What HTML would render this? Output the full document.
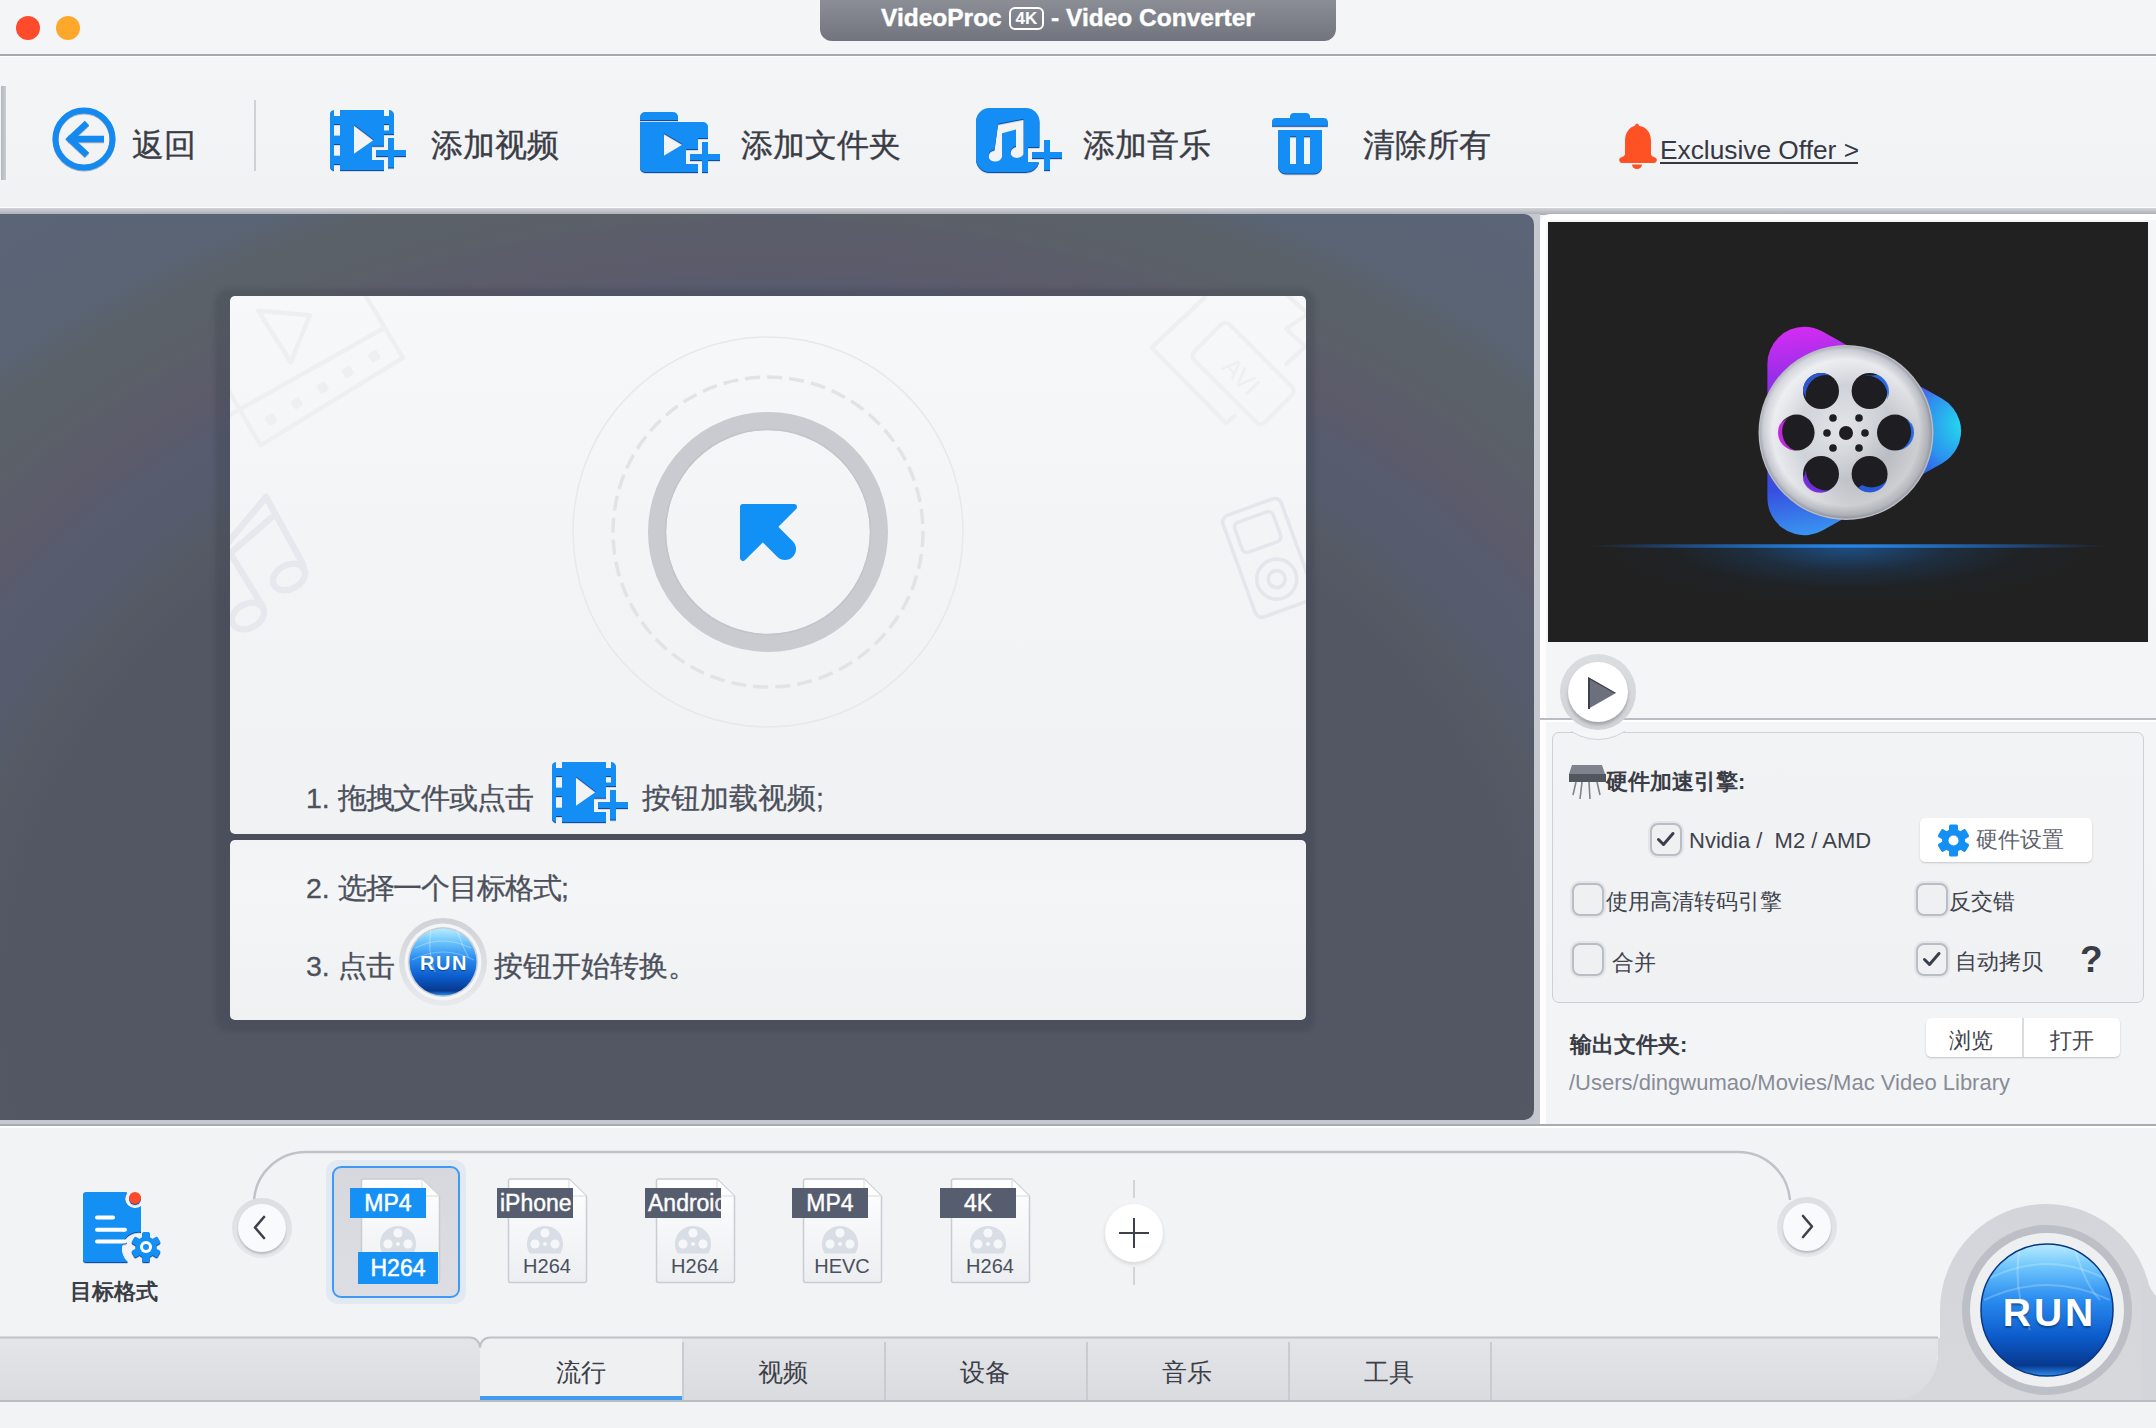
<!DOCTYPE html>
<html><head><meta charset="utf-8">
<style>
*{margin:0;padding:0;box-sizing:border-box}
html,body{width:2156px;height:1428px;overflow:hidden;background:#f2f3f5;font-family:"Liberation Sans",sans-serif;color:#3c3f48}
.a{position:absolute}
#title{left:0;top:0;width:2156px;height:54px;background:#f4f5f7}
#tline{left:0;top:54px;width:2156px;height:4px;background:linear-gradient(#a6a8ae 0,#a6a8ae 2px,#fff 2px,#fff 3px,#f4f5f7 3px)}
#tool{left:0;top:58px;width:2156px;height:149px;background:linear-gradient(#f4f5f7,#f1f2f4)}
#tbot{left:0;top:207px;width:2156px;height:8px;background:linear-gradient(#fff 0,#fff 1px,#d2d4d9 1px,#a8abb2 100%)}
#darkwrap{left:0;top:214px;width:1540px;height:911px;background:#c5c8ce}
#dark{left:0;top:214px;width:1534px;height:906px;border-radius:0 10px 10px 0;background:radial-gradient(966px 750px at 768px 786px,#535764 0%,#535764 78%,#555a65 84%,#565c6e 89%,#575c6f 94%,#5c5b6a 99%,#5b5d6a 102%,#5b6068 106%,#5a6169 112%,#5a6475 117%,#5b6577 135%)}
#rpanel{left:1540px;top:214px;width:616px;height:911px;background:#f4f5f7;border-radius:10px 0 0 0}
#video{left:1548px;top:222px;width:600px;height:420px;background:#212121}
#bline{left:0;top:1124px;width:2156px;height:2px;background:#a8abb2}
#bottom{left:0;top:1126px;width:2156px;height:302px;background:#f2f3f5}
.tl{border-radius:50%;width:24px;height:24px}
.bicon{filter:drop-shadow(0 1.5px 0 #0a4fae) drop-shadow(0 1.5px 0.6px rgba(0,0,0,.12))}
.card{border-radius:5px}
.itext{font-size:28.5px;color:#4b505b;white-space:nowrap;line-height:44px;letter-spacing:-1.1px;-webkit-text-stroke:0.3px #4b505b}
.stext{font-size:22px;line-height:30px;white-space:nowrap}
.cb{width:32px;height:33px;border-radius:8px;border:2px solid #b9bdc5;background:#eff0f2;box-shadow:0 0 0 2px #e3e5e9}
.flab{height:30px;color:#fff;font-size:23px;-webkit-text-stroke:0.4px #fff;line-height:30px;padding-left:3px;white-space:nowrap;overflow:hidden}
.tabt{top:1352px;width:202px;text-align:center;font-size:25px;line-height:40px;color:#3c3f48}
.nls{letter-spacing:0}
.ttext{font-size:32px;color:#3a3d46;white-space:nowrap;margin-top:3px;-webkit-text-stroke:0.35px #3a3d46}
</style></head><body>
<svg width="0" height="0" style="position:absolute"><defs><symbol id="vidicon" viewBox="0 0 80 64">
 <path fill="#148ef5" d="M4 0 V60 A4.5 4.5 0 0 1 0 55.5 V4.5 A4.5 4.5 0 0 1 4 0 Z"/><rect fill="#148ef5" x="3.5" y="6" width="7" height="8"/><rect fill="#148ef5" x="3.5" y="25.6" width="7" height="8.4"/><rect fill="#148ef5" x="3.5" y="45.7" width="7" height="8.3"/>
 <path fill="#148ef5" d="M10 0 H54 V35.7 H42 V50 H54 V60 H10 Z M24 14.6 V43.8 L44 29.8 Z" fill-rule="evenodd"/>
 <path fill="#148ef5" d="M59 0 A5 5 0 0 1 64 5 V24 H59 Z"/><rect fill="#148ef5" x="53" y="6" width="7" height="8"/><rect fill="#148ef5" x="53" y="20.5" width="7" height="3.5"/>
 <rect fill="#148ef5" x="58" y="28" width="6" height="29.5"/>
 <rect fill="#148ef5" x="46" y="40" width="30" height="6"/>
</symbol></defs></svg>
<div id="title" class="a"></div>
<div class="a tl" style="left:16px;top:16px;background:#fd4b2b"></div>
<div class="a tl" style="left:56px;top:16px;background:#fea82b"></div>
<div class="a" style="left:820px;top:0;width:516px;height:41px;border-radius:0 0 12px 12px;background:linear-gradient(#8c8e96,#71747e)"></div>
<div class="a" style="left:881px;top:2px;font-size:24.5px;font-weight:bold;color:#fff;line-height:32px;white-space:nowrap;-webkit-text-stroke:0.4px #fff">VideoProc <span style="display:inline-block;border:2px solid #fff;border-radius:6px;font-size:17px;line-height:19px;padding:0 5px;vertical-align:2px;-webkit-text-stroke:0">4K</span> - Video Converter</div>
<div id="tline" class="a"></div>
<div id="tool" class="a"></div>
<div id="tbot" class="a"></div>
<!-- toolbar -->
<div class="a" style="left:1px;top:86px;width:5px;height:94px;background:linear-gradient(90deg,#b4b7bd,#c9ccd1)"></div>
<svg class="a" style="left:48px;top:104px;filter:drop-shadow(0 1.5px 0.5px rgba(0,40,90,.35))" width="72" height="72" viewBox="0 0 72 72">
 <circle cx="36" cy="35" r="28.5" fill="none" stroke="#1489f0" stroke-width="6"/>
 <path d="M20 35 H56" stroke="#1489f0" stroke-width="6.4" fill="none"/>
 <path d="M39 19 L22 35 L39 51" stroke="#1489f0" stroke-width="6.4" fill="none" stroke-linejoin="miter"/>
</svg>
<div class="a ttext" style="left:132px;top:121px">返回</div>
<div class="a" style="left:254px;top:100px;width:2px;height:71px;background:#cfd1d6"></div>
<svg class="a bicon" style="left:330px;top:110px" width="80" height="64"><use href="#vidicon"/></svg>
<div class="a ttext" style="left:431px;top:121px">添加视频</div>
<svg class="a bicon" style="left:640px;top:112px" width="84" height="64" viewBox="0 0 84 64">
 <path fill="#148ef5" d="M0 8 V5 A5 5 0 0 1 5 0 H33 A5 5 0 0 1 38 5 V8 Z"/>
 <path fill="#148ef5" fill-rule="evenodd" d="M0 10 H63 A5 5 0 0 1 68 15 V26 H58 V37 H46 V52 H58 V60 H5 A5 5 0 0 1 0 55 Z M23.8 21 V43.7 L43 32.3 Z"/>
 <rect fill="#148ef5" x="62" y="30" width="6" height="30"/>
 <rect fill="#148ef5" x="50" y="42" width="30" height="6"/>
</svg>
<div class="a ttext" style="left:741px;top:121px">添加文件夹</div>
<svg class="a bicon" style="left:976px;top:108px" width="90" height="66" viewBox="0 0 90 66">
 <path fill="#148ef5" fill-rule="evenodd" d="M13.4 0 H50 A13.4 13.4 0 0 1 63.4 13.4 V39 H52 V54 H63 A13.4 13.4 0 0 1 50 64 H13.4 A13.4 13.4 0 0 1 0 50.6 V13.4 A13.4 13.4 0 0 1 13.4 0 Z
 M22 15.7 L47.7 10.7 V46 A7 6 -15 1 1 40 38 V21.6 L26 25.2 V49 A7 6 -15 1 1 18.5 41.5 Z" />
 <rect fill="#148ef5" x="68" y="32" width="6" height="30"/>
 <rect fill="#148ef5" x="56" y="44" width="30" height="6"/>
</svg>
<div class="a ttext" style="left:1083px;top:121px">添加音乐</div>
<svg class="a bicon" style="left:1270px;top:112px" width="60" height="64" viewBox="0 0 60 64">
 <path fill="#148ef5" d="M20 6 V5 A4 4 0 0 1 24 1 H36 A4 4 0 0 1 40 5 V6 H53 A4 4 0 0 1 57.8 10 V13.7 H2 V10 A4 4 0 0 1 6 6 Z"/>
 <path fill="#148ef5" fill-rule="evenodd" d="M8 18 H52 V53.5 A8 8 0 0 1 44 61.5 H16 A8 8 0 0 1 8 53.5 Z M20 24.3 V52 H26 V24.3 Z M34 24.3 V52 H40 V24.3 Z"/>
</svg>
<div class="a ttext" style="left:1363px;top:121px">清除所有</div>
<svg class="a" style="left:1617px;top:122px" width="42" height="48" viewBox="0 0 42 48">
 <path fill="#fe5224" d="M20 1.5 A2.5 2.5 0 0 1 22 3.8 C29 5 34 10 34 19 V32 C34 34 37 35 39 36 A3 3 0 0 1 37.5 41 H4.5 A3 3 0 0 1 3 36 C5 35 8 34 8 32 V19 C8 10 13 5 18 3.8 A2.5 2.5 0 0 1 20 1.5 Z"/>
 <path fill="#fe5224" d="M15 42.5 H25 A5 4.5 0 0 1 15 42.5 Z"/>
</svg>
<div class="a" style="left:1660px;top:134px;font-size:26.3px;color:#363944;line-height:32px;white-space:nowrap">Exclusive Offer &gt;</div>
<div class="a" style="left:1660px;top:161.5px;width:198px;height:2px;background:#363944"></div>

<div id="darkwrap" class="a"></div>
<div id="dark" class="a"></div>

<!-- dark area content -->
<div class="a" style="left:215px;top:289px;width:1100px;height:743px;border-radius:14px;background:rgba(50,54,62,.22);filter:blur(2px)"></div>
<div class="a card" style="left:230px;top:296px;width:1076px;height:538px;background:linear-gradient(#f7f8f9,#f3f4f6 45%,#f1f2f4)"></div>
<div class="a card" style="left:230px;top:840px;width:1076px;height:180px;background:linear-gradient(#f2f3f5,#f4f5f7 30%,#f0f1f3)"></div>
<svg class="a" style="left:230px;top:296px" width="1076" height="538" viewBox="0 0 1076 538">
 <svg x="0" y="0" width="1076" height="538" overflow="hidden">
 <g fill="none" stroke="#efeff1" stroke-width="4.5" stroke-linejoin="round" stroke-linecap="round">
  <path d="M28.3 14.8 L79.8 19.3 L60.7 66.3 Z"/>
  <path d="M134.7 -2 L172.8 61.9 L30.5 149.3 L-10 80"/>
  <path d="M-2 120 L152 33.3"/>
 </g>
 <g fill="#efeff1">
  <rect x="-5" y="-5" width="10" height="10" rx="2.5" transform="translate(41.1 123.5) rotate(-31.5)"/>
  <rect x="-5" y="-5" width="10" height="10" rx="2.5" transform="translate(66.9 107.2) rotate(-31.5)"/>
  <rect x="-5" y="-5" width="10" height="10" rx="2.5" transform="translate(92.7 91.6) rotate(-31.5)"/>
  <rect x="-5" y="-5" width="10" height="10" rx="2.5" transform="translate(117.9 75.9) rotate(-31.5)"/>
  <rect x="-5" y="-5" width="10" height="10" rx="2.5" transform="translate(144.2 60.2) rotate(-31.5)"/>
 </g>
 <g fill="none" stroke="#e6e8ee" stroke-width="6.5" stroke-linejoin="round" stroke-linecap="round">
  <path d="M-4 249 L36 201 L73 268"/>
  <path d="M-4 261 L41 222"/>
  <path d="M0 257 L33 311"/>
  <ellipse cx="59" cy="281" rx="17" ry="12" transform="rotate(-28 59 281)"/>
  <ellipse cx="18" cy="320" rx="17" ry="12" transform="rotate(-28 18 320)"/>
 </g>
 <g fill="none" stroke="#eeeff1" stroke-width="4.2" stroke-linejoin="round" stroke-linecap="round">
  <path d="M975 1.2 L921.6 51.6 L996.2 127.2 L1004.6 119.9"/>
  <rect x="963" y="52.4" width="100" height="50" rx="6" transform="rotate(45 1013 77.4)" />
  <path d="M1056 -2 L1078 18 L1056 32.7 L1078 53 M1056 68.4 L1078 48"/>
 </g>
 <text x="0" y="9" transform="translate(1011 80) rotate(45)" text-anchor="middle" font-family="Liberation Sans" font-size="26" fill="#eeeff1">AVI</text>
 <g fill="none" stroke="#e4e6ec" stroke-width="3.6" stroke-linejoin="round">
  <rect x="-31" y="-54" width="62" height="108" rx="7" transform="translate(1038.3 261.9) rotate(-20)"/>
  <rect x="-20.4" y="-15.8" width="40.8" height="31.6" rx="5" transform="translate(1027.7 236) rotate(-20)"/>
  <circle cx="1046.7" cy="283.1" r="20"/>
  <circle cx="1046.7" cy="283.1" r="8.5"/>
 </g>
 </svg>
 <circle cx="538" cy="236" r="195" fill="none" stroke="#e6e9ea" stroke-width="1.5"/>
 <circle cx="538" cy="236" r="155" fill="none" stroke="#e0e4e5" stroke-width="3.5" stroke-dasharray="15 7.1"/>
 <circle cx="538" cy="236" r="111" fill="none" stroke="#c9cbd1" stroke-width="18"/>
 <circle cx="538" cy="236" r="102.5" fill="none" stroke="#c2c4ca" stroke-width="1.5"/>
 <g transform="translate(510 208)" fill="#1190f6" stroke="#1190f6" stroke-linejoin="round" stroke-linecap="round">
  <path d="M3 3 H54 L3 54 Z" stroke-width="6"/>
  <path d="M31 31 L45 45" stroke-width="22"/>
 </g>
</svg>
<div class="a itext" style="left:306px;top:776px"><span class="nls">1. </span>拖拽文件或点击</div>
<svg class="a bicon" style="left:552px;top:762px" width="80" height="64"><use href="#vidicon"/></svg>
<div class="a itext" style="left:642px;top:776px;letter-spacing:0">按钮加载视频;</div>
<div class="a itext" style="left:306px;top:866px"><span class="nls">2. </span>选择一个目标格式;</div>
<div class="a itext" style="left:306px;top:944px"><span class="nls">3. </span>点击</div>
<div class="a itext" style="left:494px;top:944px;letter-spacing:0">按钮开始转换。</div>
<svg class="a" style="left:397px;top:916px" width="92" height="92" viewBox="0 0 92 92">
 <defs>
  <linearGradient id="rball" x1="0" y1="0" x2="0" y2="1"><stop offset="0" stop-color="#b8ecff"/><stop offset=".2" stop-color="#6cc4fc"/><stop offset=".45" stop-color="#2a8cf0"/><stop offset=".72" stop-color="#0c5ccc"/><stop offset=".93" stop-color="#07398e"/><stop offset="1" stop-color="#2f8ef0"/></linearGradient>
  <linearGradient id="rring" x1="0" y1="0" x2="0" y2="1"><stop offset="0" stop-color="#d0d2d7"/><stop offset="1" stop-color="#e9eaed"/></linearGradient>
 </defs>
 <circle cx="46" cy="46" r="44" fill="url(#rring)"/>
 <circle cx="46" cy="46" r="38.5" fill="#f4f5f7"/>
 <circle cx="46" cy="46" r="35" fill="#c9ccd2"/>
 <circle cx="46" cy="46" r="33.5" fill="url(#rball)"/>
 <g fill="none" stroke="rgba(255,255,255,.3)" stroke-width="1.2"><path d="M18 32 Q46 18 74 32"/><path d="M15 44 Q46 28 77 44"/><path d="M34 14 Q30 35 38 56"/><path d="M60 14 Q66 32 72 42"/></g>
 <text x="47" y="54" text-anchor="middle" font-family="Liberation Sans" font-weight="bold" font-size="20" fill="#fff" letter-spacing="1.5" style="text-shadow:0 1px 1px rgba(0,0,0,.4)">RUN</text>
</svg>

<!-- right panel -->
<div class="a" style="left:1540px;top:214px;width:616px;height:911px;background:#fff;border-radius:10px 0 0 0"></div>
<div class="a" style="left:1546px;top:220px;width:610px;height:905px;background:linear-gradient(#f5f6f8,#f3f4f6);border-radius:6px 0 0 0"></div>
<div class="a" style="left:1548px;top:222px;width:600px;height:420px;background:#212121;overflow:hidden">
 <div class="a" style="left:40px;top:324px;width:520px;height:60px;background:radial-gradient(ellipse 48% 100% at 50% 0%,rgba(28,110,200,.6),rgba(24,70,120,.35) 40%,rgba(25,40,55,.2) 70%,rgba(0,0,0,0) 100%)"></div>
 <div class="a" style="left:40px;top:322px;width:520px;height:4px;background:radial-gradient(ellipse 50% 100% at 50% 50%,#2a90f4,rgba(30,120,230,.5) 60%,rgba(30,120,220,0))"></div>
</div>
<svg class="a" style="left:1740px;top:320px" width="240" height="230" viewBox="0 0 240 230">
 <defs>
  <linearGradient id="tri" gradientUnits="userSpaceOnUse" x1="30" y1="0" x2="60" y2="225">
   <stop offset="0" stop-color="#e22cf4"/><stop offset=".25" stop-color="#9a2ee8"/><stop offset=".5" stop-color="#5a36dc"/><stop offset=".75" stop-color="#3650e0"/><stop offset="1" stop-color="#3aa2f4"/>
  </linearGradient>
  <radialGradient id="cyan" gradientUnits="userSpaceOnUse" cx="225" cy="105" r="80">
   <stop offset="0" stop-color="#22e0ec"/><stop offset=".5" stop-color="#2a9af0" stop-opacity=".9"/><stop offset="1" stop-color="#2a6af0" stop-opacity="0"/>
  </radialGradient>
  <radialGradient id="silver" cx="50%" cy="50%" r="50%">
   <stop offset="0" stop-color="#e6e8ec"/><stop offset=".55" stop-color="#cfd2d9"/><stop offset=".85" stop-color="#e9eaee"/><stop offset=".96" stop-color="#c3c6ce"/><stop offset="1" stop-color="#9ea2ad"/>
  </radialGradient>
  <linearGradient id="sheen" x1="0" y1="0" x2="1" y2="1">
   <stop offset="0" stop-color="#fff" stop-opacity=".55"/><stop offset=".35" stop-color="#fff" stop-opacity="0"/><stop offset=".65" stop-color="#000" stop-opacity=".08"/><stop offset="1" stop-color="#fff" stop-opacity=".4"/>
  </linearGradient>
 </defs>
 <path d="M64.4 43.8 L184 111 L64.4 178.2 Z" fill="url(#tri)" stroke="url(#tri)" stroke-width="74" stroke-linejoin="round"/>
 <path d="M64.4 43.8 L184 111 L64.4 178.2 Z" fill="url(#cyan)" stroke="url(#cyan)" stroke-width="74" stroke-linejoin="round"/>
 <circle cx="106" cy="112.5" r="87.5" fill="#b9bcc4"/>
 <circle cx="106" cy="112.5" r="86" fill="url(#silver)"/>
 <circle cx="106" cy="112.5" r="86" fill="url(#sheen)"/>
 <g fill="#1e1e22">
  <circle cx="81" cy="71" r="18"/><circle cx="129.6" cy="71" r="18"/>
  <circle cx="56.6" cy="112.6" r="18"/><circle cx="155" cy="112.6" r="18"/>
  <circle cx="81" cy="154" r="18"/><circle cx="129.6" cy="154" r="18"/>
  <circle cx="106" cy="113" r="7"/>
  <circle cx="93" cy="98" r="3.8"/><circle cx="119" cy="98" r="3.8"/>
  <circle cx="87" cy="113" r="3.8"/><circle cx="125" cy="113" r="3.8"/>
  <circle cx="93" cy="128" r="3.8"/><circle cx="119" cy="128" r="3.8"/>
 </g>
 <g opacity=".9">
  <path d="M63 71 A18 18 0 0 1 90 55.5 A20 20 0 0 0 66 78 Z" fill="#2f5ee6"/>
  <path d="M138 55 A18 18 0 0 1 147 80 A20 20 0 0 0 125 56 Z" fill="#2a70ee"/>
  <path d="M40 104 A18 18 0 0 0 55 130.5 A20 20 0 0 1 50 96 Z" fill="#d02cf0"/>
  <path d="M172 104 A18 18 0 0 1 160 130 A20 20 0 0 0 163 96 Z" fill="#2a6ef0"/>
  <path d="M63 160 A18 18 0 0 0 90 170 A20 20 0 0 1 66 150 Z" fill="#7a30e6"/>
  <path d="M118 168 A18 18 0 0 0 147 160 A20 20 0 0 1 122 165 Z" fill="#2a60e8"/>
 </g>
</svg>
<div class="a" style="left:1540px;top:718px;width:616px;height:2px;background:#b9bcc3"></div>
<div class="a" style="left:1540px;top:720px;width:616px;height:2px;background:#fff"></div>
<div class="a" style="left:1552px;top:732px;width:592px;height:271px;border:1.5px solid #cdd0d5;border-radius:7px;background:linear-gradient(#f2f3f5,#f0f1f3)"></div>
<div class="a" style="left:1540px;top:731px;width:120px;height:15px;overflow:hidden"><div class="a" style="left:10px;top:-87px;width:96px;height:96px;border-radius:50%;background:#f5f6f8;border:1.5px solid #cfd2d7"></div></div>
<div class="a" style="left:1560px;top:654px;width:76px;height:76px;border-radius:50%;background:linear-gradient(#dcdde0,#d0d2d6)"></div>
<div class="a" style="left:1568px;top:662px;width:60px;height:60px;border-radius:50%;background:#fff;box-shadow:0 3px 3px rgba(80,84,96,.35)"></div>
<svg class="a" style="left:1586px;top:675px" width="32" height="36" viewBox="0 0 32 36"><path d="M2 2 L30 18 L2 34 Z" fill="#6b707c"/><path d="M2 2 L30 18 L28 18 L4 4.5 V34 L2 34Z" fill="#3d414b"/></svg>
<svg class="a" style="left:1569px;top:765px" width="38" height="36" viewBox="0 0 38 36">
 <path d="M3 0 H33 L36 9 H0 Z" fill="#7e838d"/>
 <rect x="0" y="9" width="37" height="8" fill="#52565f"/>
 <g stroke="#7e838d" stroke-width="1.6" fill="none"><path d="M7 17 L4 30 M13 17 L11 34 M20 17 L21 34 M28 17 L31 30"/></g>
</svg>
<div class="a stext" style="left:1606px;top:767px;font-weight:bold;color:#3a3d46">硬件加速引擎:</div>
<div class="a cb" style="left:1650px;top:823px"></div>
<svg class="a" style="left:1656px;top:830px" width="20" height="18" viewBox="0 0 20 18"><path d="M2.5 9.5 L7.5 14.5 L17 3.5" fill="none" stroke="#3b3f4b" stroke-width="3" stroke-linecap="round" stroke-linejoin="round"/></svg>
<div class="a stext" style="left:1689px;top:826px;font-size:22px;color:#3f434c">Nvidia /&nbsp; M2 / AMD</div>
<div class="a" style="left:1920px;top:818px;width:172px;height:44px;background:#fff;border-radius:5px;box-shadow:0 1px 2px rgba(0,0,0,.18)"></div>
<svg class="a" style="left:1937px;top:824px" width="33" height="33" viewBox="-16.5 -16.5 33 33">
 <g fill="#1490f4"><circle r="11.5"/>
 <g id="tooth"><rect x="-4.5" y="-16" width="9" height="9" rx="1.5"/></g>
 <use href="#tooth" transform="rotate(60)"/><use href="#tooth" transform="rotate(120)"/><use href="#tooth" transform="rotate(180)"/><use href="#tooth" transform="rotate(240)"/><use href="#tooth" transform="rotate(300)"/></g>
 <circle r="5" fill="#fff"/>
</svg>
<div class="a stext" style="left:1976px;top:825px;color:#5f636d">硬件设置</div>
<div class="a cb" style="left:1572px;top:883px"></div>
<div class="a stext" style="left:1606px;top:887px;color:#3f434c">使用高清转码引擎</div>
<div class="a cb" style="left:1916px;top:883px"></div>
<div class="a stext" style="left:1949px;top:887px;color:#3f434c">反交错</div>
<div class="a cb" style="left:1572px;top:943px"></div>
<div class="a stext" style="left:1612px;top:948px;color:#3f434c">合并</div>
<div class="a cb" style="left:1916px;top:943px"></div>
<svg class="a" style="left:1922px;top:950px" width="20" height="18" viewBox="0 0 20 18"><path d="M2.5 9.5 L7.5 14.5 L17 3.5" fill="none" stroke="#3b3f4b" stroke-width="3" stroke-linecap="round" stroke-linejoin="round"/></svg>
<div class="a stext" style="left:1955px;top:947px;color:#3f434c">自动拷贝</div>
<div class="a" style="left:2080px;top:940px;font-size:37px;font-weight:bold;color:#3a3d46;line-height:40px">?</div>
<div class="a stext" style="left:1570px;top:1030px;font-weight:bold;color:#3a3d46">输出文件夹:</div>
<div class="a" style="left:1926px;top:1018px;width:194px;height:39px;background:#fff;border-radius:5px;box-shadow:0 1px 2px rgba(0,0,0,.2)"></div>
<div class="a" style="left:2022px;top:1018px;width:2px;height:39px;background:#d9dbdf"></div>
<div class="a stext" style="left:1949px;top:1026px;color:#3f434c">浏览</div>
<div class="a stext" style="left:2050px;top:1026px;color:#3f434c">打开</div>
<div class="a" style="left:1569px;top:1068px;font-size:22px;color:#878c96;line-height:30px;white-space:nowrap">/Users/dingwumao/Movies/Mac Video Library</div>

<div id="bline" class="a"></div>
<div id="bottom" class="a"></div>
<!-- bottom -->
<div class="a" style="left:0;top:1126px;width:2156px;height:2px;background:#fff"></div>
<svg class="a" style="left:0;top:1140px" width="2156" height="120" viewBox="0 1140 2156 120">
 <path d="M254 1200 A52 52 0 0 1 306 1152 H1738 A52 52 0 0 1 1790 1200" fill="none" stroke="#bfc2c8" stroke-width="2.5"/>
</svg>
<svg class="a bicon" style="left:50px;top:1185px" width="120" height="85" viewBox="50 1185 120 85">
 <path fill="#1490f4" d="M86 1192 H127 A10 10 0 0 0 141 1206 V1232 A17 17 0 0 0 128 1262 H86 A3 3 0 0 1 83 1259 V1195 A3 3 0 0 1 86 1192 Z"/>
 <circle cx="135" cy="1198" r="6" fill="#fe4a2a"/>
 <g stroke="#fff" stroke-width="4" stroke-linecap="round"><path d="M97 1217.5 H113 M97 1229.8 H125 M97 1241.5 H125"/></g>
 <g transform="translate(146 1247)" fill="#1490f4">
  <circle r="10.5"/>
  <rect x="-3.8" y="-15" width="7.6" height="8" rx="1.5"/>
  <rect x="-3.8" y="-15" width="7.6" height="8" rx="1.5" transform="rotate(60)"/>
  <rect x="-3.8" y="-15" width="7.6" height="8" rx="1.5" transform="rotate(120)"/>
  <rect x="-3.8" y="-15" width="7.6" height="8" rx="1.5" transform="rotate(180)"/>
  <rect x="-3.8" y="-15" width="7.6" height="8" rx="1.5" transform="rotate(240)"/>
  <rect x="-3.8" y="-15" width="7.6" height="8" rx="1.5" transform="rotate(300)"/>
  <circle r="6" fill="#fff"/><circle r="3" fill="#1490f4"/>
 </g>
</svg>
<div class="a" style="left:70px;top:1277px;font-size:22px;font-weight:bold;color:#3a3d46;line-height:30px;white-space:nowrap">目标格式</div>
<div class="a" style="left:232px;top:1198px;width:60px;height:60px;border-radius:50%;background:linear-gradient(#dcdee1,#e6e7ea)"></div>
<div class="a" style="left:238px;top:1204px;width:48px;height:48px;border-radius:50%;background:#f9fafb;box-shadow:0 2px 2px rgba(80,84,96,.3)"></div>
<svg class="a" style="left:250px;top:1214px" width="20" height="28" viewBox="0 0 20 28"><path d="M14 3 L5 13.5 L14 24" fill="none" stroke="#3d414b" stroke-width="2.6" stroke-linecap="round" stroke-linejoin="round"/></svg>
<div class="a" style="left:1777px;top:1197px;width:60px;height:60px;border-radius:50%;background:linear-gradient(#dcdee1,#e6e7ea)"></div>
<div class="a" style="left:1783px;top:1203px;width:48px;height:48px;border-radius:50%;background:#f9fafb;box-shadow:0 2px 2px rgba(80,84,96,.3)"></div>
<svg class="a" style="left:1797px;top:1213px" width="20" height="28" viewBox="0 0 20 28"><path d="M6 3 L15 13.5 L6 24" fill="none" stroke="#3d414b" stroke-width="2.6" stroke-linecap="round" stroke-linejoin="round"/></svg>
<div class="a" style="left:326px;top:1160px;width:140px;height:144px;border-radius:12px;background:#e3e9f3"></div>
<div class="a" style="left:332px;top:1166px;width:128px;height:132px;border-radius:9px;border:2.5px solid #3e9bf5;background:linear-gradient(#d6d8de,#dcdee3)"></div>
<svg class="a" style="left:360px;top:1178px" width="82" height="108" viewBox="0 0 82 108">
 <defs><linearGradient id="dg360" x1="0" y1="0" x2="0" y2="1"><stop offset="0" stop-color="#ffffff"/><stop offset="1" stop-color="#eceef1"/></linearGradient></defs>
 <path d="M1.5 3 A2 2 0 0 1 3.5 1 H62 L79.5 18 V102 A2 2 0 0 1 77.5 104.5 H3.5 A2 2 0 0 1 1.5 102.5 Z" fill="url(#dg360)" stroke="#c9ccd2" stroke-width="1.5"/>
 <path d="M62 1 V18 H79.5 Z" fill="#fff" stroke="#d6d9de" stroke-width="1"/>
 <g fill="#d9dde5"><path d="M22.8 75.6 A18 18 0 1 1 53.2 75.6 Z"/></g>
 <g fill="#f6f7f9"><circle cx="38" cy="55" r="4.6"/><circle cx="28" cy="66" r="4.6"/><circle cx="48" cy="66" r="4.6"/><circle cx="38" cy="66" r="2"/></g>
</svg>
<div class="a flab" style="left:350px;top:1188px;width:76px;background:#1590f4;text-align:center;padding:0;-webkit-text-stroke:0.5px #fff">MP4</div>
<div class="a flab" style="left:358px;top:1252px;width:80px;height:32px;line-height:32px;background:#1590f4;text-align:center;padding:0;font-size:23px;-webkit-text-stroke:0.5px #fff">H264</div>
<svg class="a" style="left:507px;top:1178px" width="82" height="108" viewBox="0 0 82 108">
 <defs><linearGradient id="dg507" x1="0" y1="0" x2="0" y2="1"><stop offset="0" stop-color="#ffffff"/><stop offset="1" stop-color="#eceef1"/></linearGradient></defs>
 <path d="M1.5 3 A2 2 0 0 1 3.5 1 H62 L79.5 18 V102 A2 2 0 0 1 77.5 104.5 H3.5 A2 2 0 0 1 1.5 102.5 Z" fill="url(#dg507)" stroke="#c9ccd2" stroke-width="1.5"/>
 <path d="M62 1 V18 H79.5 Z" fill="#fff" stroke="#d6d9de" stroke-width="1"/>
 <g fill="#d9dde5"><path d="M22.8 75.6 A18 18 0 1 1 53.2 75.6 Z"/></g>
 <g fill="#f6f7f9"><circle cx="38" cy="55" r="4.6"/><circle cx="28" cy="66" r="4.6"/><circle cx="48" cy="66" r="4.6"/><circle cx="38" cy="66" r="2"/></g>
</svg>
<div class="a flab" style="left:497px;top:1188px;width:76px;background:#555d6e">iPhone</div>
<div class="a" style="left:507px;top:1253px;width:80px;text-align:center;font-size:20px;line-height:26px;color:#4a505c">H264</div>
<svg class="a" style="left:655px;top:1178px" width="82" height="108" viewBox="0 0 82 108">
 <defs><linearGradient id="dg655" x1="0" y1="0" x2="0" y2="1"><stop offset="0" stop-color="#ffffff"/><stop offset="1" stop-color="#eceef1"/></linearGradient></defs>
 <path d="M1.5 3 A2 2 0 0 1 3.5 1 H62 L79.5 18 V102 A2 2 0 0 1 77.5 104.5 H3.5 A2 2 0 0 1 1.5 102.5 Z" fill="url(#dg655)" stroke="#c9ccd2" stroke-width="1.5"/>
 <path d="M62 1 V18 H79.5 Z" fill="#fff" stroke="#d6d9de" stroke-width="1"/>
 <g fill="#d9dde5"><path d="M22.8 75.6 A18 18 0 1 1 53.2 75.6 Z"/></g>
 <g fill="#f6f7f9"><circle cx="38" cy="55" r="4.6"/><circle cx="28" cy="66" r="4.6"/><circle cx="48" cy="66" r="4.6"/><circle cx="38" cy="66" r="2"/></g>
</svg>
<div class="a flab" style="left:645px;top:1188px;width:76px;background:#555d6e">Androi<span style="opacity:.85">d</span></div>
<div class="a" style="left:655px;top:1253px;width:80px;text-align:center;font-size:20px;line-height:26px;color:#4a505c">H264</div>
<svg class="a" style="left:802px;top:1178px" width="82" height="108" viewBox="0 0 82 108">
 <defs><linearGradient id="dg802" x1="0" y1="0" x2="0" y2="1"><stop offset="0" stop-color="#ffffff"/><stop offset="1" stop-color="#eceef1"/></linearGradient></defs>
 <path d="M1.5 3 A2 2 0 0 1 3.5 1 H62 L79.5 18 V102 A2 2 0 0 1 77.5 104.5 H3.5 A2 2 0 0 1 1.5 102.5 Z" fill="url(#dg802)" stroke="#c9ccd2" stroke-width="1.5"/>
 <path d="M62 1 V18 H79.5 Z" fill="#fff" stroke="#d6d9de" stroke-width="1"/>
 <g fill="#d9dde5"><path d="M22.8 75.6 A18 18 0 1 1 53.2 75.6 Z"/></g>
 <g fill="#f6f7f9"><circle cx="38" cy="55" r="4.6"/><circle cx="28" cy="66" r="4.6"/><circle cx="48" cy="66" r="4.6"/><circle cx="38" cy="66" r="2"/></g>
</svg>
<div class="a flab" style="left:792px;top:1188px;width:76px;background:#555d6e;text-align:center;padding:0">MP4</div>
<div class="a" style="left:802px;top:1253px;width:80px;text-align:center;font-size:20px;line-height:26px;color:#4a505c">HEVC</div>
<svg class="a" style="left:950px;top:1178px" width="82" height="108" viewBox="0 0 82 108">
 <defs><linearGradient id="dg950" x1="0" y1="0" x2="0" y2="1"><stop offset="0" stop-color="#ffffff"/><stop offset="1" stop-color="#eceef1"/></linearGradient></defs>
 <path d="M1.5 3 A2 2 0 0 1 3.5 1 H62 L79.5 18 V102 A2 2 0 0 1 77.5 104.5 H3.5 A2 2 0 0 1 1.5 102.5 Z" fill="url(#dg950)" stroke="#c9ccd2" stroke-width="1.5"/>
 <path d="M62 1 V18 H79.5 Z" fill="#fff" stroke="#d6d9de" stroke-width="1"/>
 <g fill="#d9dde5"><path d="M22.8 75.6 A18 18 0 1 1 53.2 75.6 Z"/></g>
 <g fill="#f6f7f9"><circle cx="38" cy="55" r="4.6"/><circle cx="28" cy="66" r="4.6"/><circle cx="48" cy="66" r="4.6"/><circle cx="38" cy="66" r="2"/></g>
</svg>
<div class="a flab" style="left:940px;top:1188px;width:76px;background:#555d6e;text-align:center;padding:0">4K</div>
<div class="a" style="left:950px;top:1253px;width:80px;text-align:center;font-size:20px;line-height:26px;color:#4a505c">H264</div>

<div class="a" style="left:1133px;top:1180px;width:2px;height:18px;background:#d2d4d8"></div>
<div class="a" style="left:1133px;top:1267px;width:2px;height:18px;background:#d2d4d8"></div>
<div class="a" style="left:1105px;top:1204px;width:58px;height:58px;border-radius:50%;background:#fff;box-shadow:0 2px 4px rgba(0,0,0,.12)"></div>
<svg class="a" style="left:1118px;top:1217px" width="32" height="32" viewBox="0 0 32 32"><path d="M16 1 V31 M1 16 H31" stroke="#3d414b" stroke-width="2"/></svg>
<!-- tab bar -->
<svg class="a" style="left:0;top:1190px" width="2156" height="238" viewBox="0 1190 2156 238">
 <defs>
  <linearGradient id="tabg" x1="0" y1="0" x2="0" y2="1"><stop offset="0" stop-color="#e4e5e8"/><stop offset="1" stop-color="#d9dbdf"/></linearGradient>
  <linearGradient id="sock" x1="0" y1="0" x2="0" y2="1"><stop offset="0" stop-color="#d3d5da"/><stop offset="1" stop-color="#d6d8dc"/></linearGradient>
  <linearGradient id="bigball" x1="0" y1="0" x2="0" y2="1"><stop offset="0" stop-color="#b8ecff"/><stop offset=".18" stop-color="#6cc4fc"/><stop offset=".42" stop-color="#2a8cf0"/><stop offset=".7" stop-color="#0c5ccc"/><stop offset=".92" stop-color="#07398e"/><stop offset="1" stop-color="#2f8ef0"/></linearGradient>
 </defs>
 <path d="M1880 1400 V1360 H1938 V1338 H1940 V1310 A106 106 0 0 1 2152 1310 V1400 Z" fill="url(#sock)"/>
 <path d="M2141 1268 Q2150 1290 2156 1296 V1400 H2141 Z" fill="#d3d5da"/>
 <path d="M0 1338 H2156 V1400 H0 Z" fill="url(#tabg)" opacity="0"/>
 <path d="M0 1338 H470 A10 10 0 0 1 480 1348 V1400 H0 Z" fill="url(#tabg)"/>
 <path d="M480 1348 A10 10 0 0 1 490 1338 H1938 V1355 A45 45 0 0 1 1893 1400 H480 Z" fill="url(#tabg)"/>
 <path d="M480 1338 H682 V1400 H480 Z" fill="#eef0f2"/>
 <rect x="480" y="1396" width="202" height="4" fill="#3d9bf2"/>
 <g fill="#c8cbd0"><rect x="682" y="1342" width="2" height="58"/><rect x="884" y="1342" width="2" height="58"/><rect x="1086" y="1342" width="2" height="58"/><rect x="1288" y="1342" width="2" height="58"/><rect x="1490" y="1342" width="2" height="58"/></g>
 <path d="M0 1337.5 H470 A10 10 0 0 1 480 1347.5" fill="none" stroke="#bfc2c8" stroke-width="2"/>
 <path d="M480 1347.5 A10 10 0 0 1 490 1337.5 H1938" fill="none" stroke="#bfc2c8" stroke-width="2"/>
 <rect x="0" y="1400" width="2156" height="2" fill="#b9bcc2"/>
 <circle cx="2047" cy="1310" r="85" fill="#bcbfc5"/>
 <circle cx="2047" cy="1310" r="77" fill="#eeeff1"/>
 <circle cx="2047" cy="1310" r="66" fill="url(#bigball)"/>
 <g fill="none" stroke="rgba(255,255,255,.22)" stroke-width="2">
  <path d="M1990 1278 Q2047 1250 2104 1278"/><path d="M1984 1300 Q2047 1270 2110 1300"/>
  <path d="M2020 1246 Q2012 1290 2030 1330"/><path d="M2074 1246 Q2085 1285 2100 1300"/>
 </g>
 <circle cx="2047" cy="1310" r="66" fill="none" stroke="#0a3580" stroke-width="1.5"/>
</svg>
<div class="a" style="left:1400px;top:1402px;width:756px;height:26px;background:#f2f3f5"></div>
<div class="a tabt" style="left:480px">流行</div>
<div class="a tabt" style="left:682px">视频</div>
<div class="a tabt" style="left:884px">设备</div>
<div class="a tabt" style="left:1086px">音乐</div>
<div class="a tabt" style="left:1288px">工具</div>
<div class="a" style="left:1986px;top:1290px;width:124px;text-align:center;font-size:39px;font-weight:bold;color:#fff;letter-spacing:3px;text-indent:3px;line-height:46px;text-shadow:0 2px 2px rgba(0,0,0,.35)">RUN</div>

</body></html>
